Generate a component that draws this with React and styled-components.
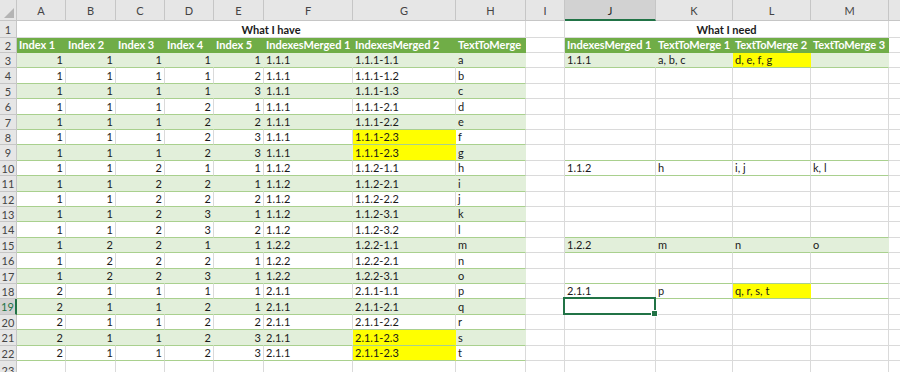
import React from "react"
import styled, { createGlobalStyle } from "styled-components"

const GRID = "#dadada"
const TABLE_LINE = "#a9d08e"
const BAND = "#e2efda"
const HEAD = "#70ad47"
const YELLOW = "#ffff00"
const SELECT = "#217346"

const GlobalStyle = createGlobalStyle`
  html, body {
    margin: 0;
    padding: 0;
    background: #fff;
  }
  body {
    font-family: Lato, "Liberation Sans", sans-serif;
    overflow: hidden;
  }
`

const letters = ["A", "B", "C", "D", "E", "F", "G", "H", "I", "J", "K", "L", "M", "N"]
const colWidths = [17, 49, 50, 49, 49, 50, 89, 103, 70, 39, 91, 77, 78, 78, 40]
const rowHeights = [
  21, 17, 15,
  15, 16, 15, 16, 15, 15, 16, 15, 16, 15,
  15, 16, 15, 16, 15, 15, 16, 15, 16, 15,
  20,
]

const leftRows = [
  [1, 1, 1, 1, 1, "1.1.1", "1.1.1-1.1", "a"],
  [1, 1, 1, 1, 2, "1.1.1", "1.1.1-1.2", "b"],
  [1, 1, 1, 1, 3, "1.1.1", "1.1.1-1.3", "c"],
  [1, 1, 1, 2, 1, "1.1.1", "1.1.1-2.1", "d"],
  [1, 1, 1, 2, 2, "1.1.1", "1.1.1-2.2", "e"],
  [1, 1, 1, 2, 3, "1.1.1", "1.1.1-2.3", "f"],
  [1, 1, 1, 2, 3, "1.1.1", "1.1.1-2.3", "g"],
  [1, 1, 2, 1, 1, "1.1.2", "1.1.2-1.1", "h"],
  [1, 1, 2, 2, 1, "1.1.2", "1.1.2-2.1", "i"],
  [1, 1, 2, 2, 2, "1.1.2", "1.1.2-2.2", "j"],
  [1, 1, 2, 3, 1, "1.1.2", "1.1.2-3.1", "k"],
  [1, 1, 2, 3, 2, "1.1.2", "1.1.2-3.2", "l"],
  [1, 2, 2, 1, 1, "1.2.2", "1.2.2-1.1", "m"],
  [1, 2, 2, 2, 1, "1.2.2", "1.2.2-2.1", "n"],
  [1, 2, 2, 3, 1, "1.2.2", "1.2.2-3.1", "o"],
  [2, 1, 1, 1, 1, "2.1.1", "2.1.1-1.1", "p"],
  [2, 1, 1, 2, 1, "2.1.1", "2.1.1-2.1", "q"],
  [2, 1, 1, 2, 2, "2.1.1", "2.1.1-2.2", "r"],
  [2, 1, 1, 2, 3, "2.1.1", "2.1.1-2.3", "s"],
  [2, 1, 1, 2, 3, "2.1.1", "2.1.1-2.3", "t"],
]

const leftHeaders = ["Index 1", "Index 2", "Index 3", "Index 4", "Index 5", "IndexesMerged 1", "IndexesMerged 2", "TextToMerge"]
const rightHeaders = ["IndexesMerged 1", "TextToMerge 1", "TextToMerge 2", "TextToMerge 3"]

const rightRows = {
  3: ["1.1.1", "a, b, c", "d, e, f, g", ""],
  10: ["1.1.2", "h", "i, j", "k, l"],
  15: ["1.2.2", "m", "n", "o"],
  18: ["2.1.1", "p", "q, r, s, t", ""],
}
const rightBand = [3, 15]

const yellowCells = ["G8", "G9", "G21", "G22", "L3", "L18"]
const selected = { row: 19, col: 9 }

const Sheet = styled.div`
  display: grid;
  grid-template-columns: ${colWidths.map(w => `${w}px`).join(" ")};
  grid-template-rows: ${rowHeights.map(h => `${h}px`).join(" ")};
  width: 900px;
  height: 372px;
  overflow: hidden;
  font-size: 11px;
  color: #1a1a1a;
`

const Corner = styled.div`
  position: relative;
  background: #e6e6e6;
  border-right: 1px solid #c6c6c6;
  border-bottom: 1px solid #c6c6c6;
  &:after {
    content: "";
    position: absolute;
    right: 2px;
    bottom: 2px;
    border-left: 10px solid transparent;
    border-bottom: 10px solid #b4b4b4;
  }
`

const ColHead = styled.div`
  display: flex;
  align-items: center;
  justify-content: center;
  background: ${props => (props.$active ? "#d2d2d2" : "#e6e6e6")};
  border-right: 1px solid #c6c6c6;
  border-bottom: ${props => (props.$active ? `2px solid ${SELECT}` : "1px solid #c6c6c6")};
  color: ${props => (props.$active ? "#262626" : "#444")};
  font-size: 11px;
  padding-top: 1px;
`

const RowHead = styled.div`
  display: flex;
  align-items: center;
  justify-content: center;
  background: ${props => (props.$active ? "#d2d2d2" : "#e6e6e6")};
  border-right: ${props => (props.$active ? `2px solid ${SELECT}` : "1px solid #c6c6c6")};
  border-bottom: 1px solid #c6c6c6;
  color: ${props => (props.$active ? SELECT : "#444")};
  font-size: 11px;
  overflow: hidden;
`

const Cell = styled.div`
  position: relative;
  display: flex;
  align-items: flex-end;
  justify-content: ${props => (props.$align === "right" ? "flex-end" : props.$align === "center" ? "center" : "flex-start")};
  grid-column: span ${props => props.$span || 1};
  padding: 0 2px 1px;
  background: ${props => props.$bg || "#fff"};
  border-right: 1px solid ${props => props.$right || GRID};
  border-bottom: 1px solid ${props => props.$bottom || GRID};
  color: ${props => (props.$white ? "#fff" : "#1a1a1a")};
  font-weight: ${props => (props.$bold ? 700 : 400)};
  white-space: nowrap;
  line-height: 13px;
`

const Selection = styled.div`
  position: absolute;
  left: -2px;
  top: -2px;
  right: -1px;
  bottom: -1px;
  border: 2px solid ${SELECT};
  z-index: 2;
  &:after {
    content: "";
    position: absolute;
    right: -4px;
    bottom: -4px;
    width: 5px;
    height: 5px;
    background: ${SELECT};
    border: 1px solid #fff;
  }
`

const inLeft = (r, c) => c <= 7 && r >= 2 && r <= 22
const inRight = (r, c) => c >= 9 && c <= 12 && (r === 2 || rightRows[r])

const cellProps = (r, c) => {
  const props = {}
  const ref = letters[c] + r

  if (inLeft(r, c)) {
    if (r === 2) {
      Object.assign(props, { $bg: HEAD, $right: HEAD, $bottom: HEAD, $white: true, $bold: true })
    } else {
      props.$bottom = TABLE_LINE
      if (r % 2 === 1) Object.assign(props, { $bg: BAND, $right: BAND })
    }
    props.$align = c <= 4 && r > 2 ? "right" : "left"
  } else if (inRight(r, c)) {
    if (r === 2) {
      Object.assign(props, { $bg: HEAD, $right: HEAD, $bottom: HEAD, $white: true, $bold: true })
    } else {
      props.$bottom = TABLE_LINE
      if (rightBand.includes(r)) Object.assign(props, { $bg: BAND, $right: BAND })
    }
  } else if (c >= 9 && c <= 12 && rightRows[r + 1]) {
    props.$bottom = TABLE_LINE
  }

  if (yellowCells.includes(ref)) Object.assign(props, { $bg: YELLOW, $right: YELLOW })
  return props
}

const cellText = (r, c) => {
  if (r === 2 && c <= 7) return leftHeaders[c]
  if (r === 2 && c >= 9 && c <= 12) return rightHeaders[c - 9]
  if (r >= 3 && r <= 22 && c <= 7) return leftRows[r - 3][c]
  if (rightRows[r] && c >= 9 && c <= 12) return rightRows[r][c - 9]
  return ""
}

const TitleRow = () => (
  <>
    <RowHead>1</RowHead>
    <Cell $span={8} $align="center" $bold>What I have</Cell>
    <Cell />
    <Cell $span={4} $align="center" $bold>What I need</Cell>
    <Cell />
  </>
)

const SheetRow = ({ row }) => (
  <>
    <RowHead $active={row === selected.row}>{row}</RowHead>
    {letters.map((letter, c) => (
      <Cell key={letter} {...cellProps(row, c)}>
        {cellText(row, c)}
        {row === selected.row && c === selected.col && <Selection />}
      </Cell>
    ))}
  </>
)

const App = () => {
  const rows = Array.from({ length: 22 }, (_, i) => i + 2)
  return (
    <>
      <GlobalStyle />
      <Sheet>
        <Corner />
        {letters.map((letter, c) => (
          <ColHead key={letter} $active={c === selected.col}>
            {c < 13 ? letter : ""}
          </ColHead>
        ))}
        <TitleRow />
        {rows.map(row => (
          <SheetRow key={row} row={row} />
        ))}
      </Sheet>
    </>
  )
}

export default App
